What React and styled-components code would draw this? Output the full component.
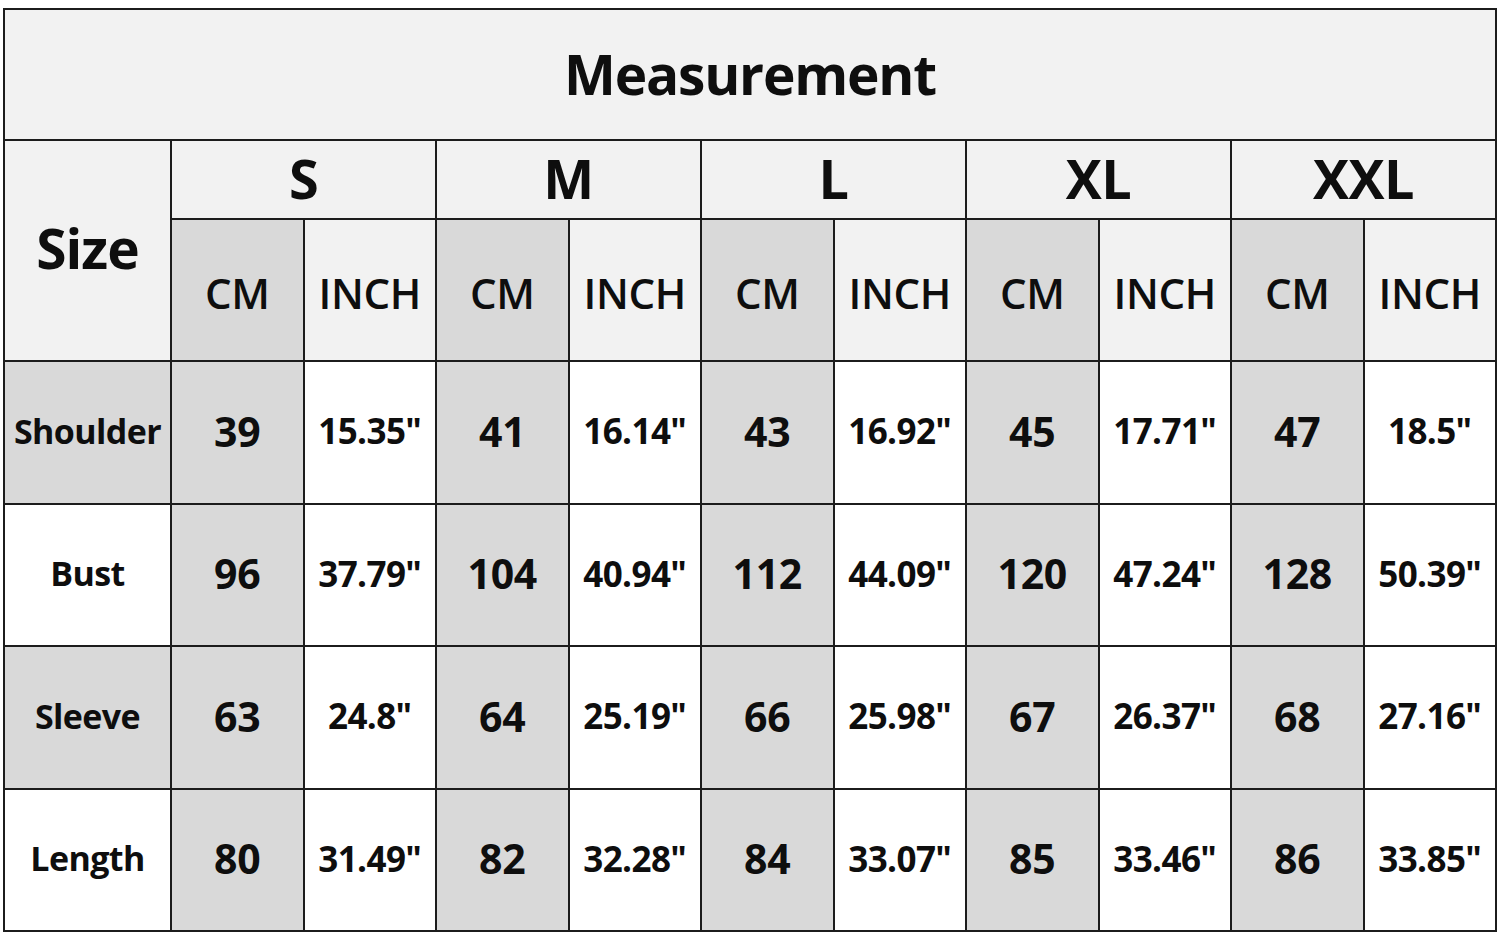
import styled, { createGlobalStyle } from 'styled-components';

const GlobalStyle = createGlobalStyle`
  body {
    margin: 0;
    background: #ffffff;
    font-family: "Open Sans", "Noto Sans", sans-serif;
    color: #0e0e0e;
  }
`;

const sizes = ['S', 'M', 'L', 'XL', 'XXL'];

const rows = [
  { label: 'Shoulder', shade: true, values: [['39', '15.35"'], ['41', '16.14"'], ['43', '16.92"'], ['45', '17.71"'], ['47', '18.5"']] },
  { label: 'Bust', shade: false, values: [['96', '37.79"'], ['104', '40.94"'], ['112', '44.09"'], ['120', '47.24"'], ['128', '50.39"']] },
  { label: 'Sleeve', shade: true, values: [['63', '24.8"'], ['64', '25.19"'], ['66', '25.98"'], ['67', '26.37"'], ['68', '27.16"']] },
  { label: 'Length', shade: false, values: [['80', '31.49"'], ['82', '32.28"'], ['84', '33.07"'], ['85', '33.46"'], ['86', '33.85"']] },
];

const SizeChart = () => {
  return (
    <Page>
      <GlobalStyle />
      <Grid>
        <TitleCell>Measurement</TitleCell>
        <SizeCell>Size</SizeCell>
        {sizes.map((s) => (
          <SizeHead key={s}>{s}</SizeHead>
        ))}
        {sizes.map((s) => [
          <UnitHead key={s + 'cm'} $cm>CM</UnitHead>,
          <UnitHead key={s + 'in'}>INCH</UnitHead>,
        ])}
        {rows.map((row) => [
          <LabelCell key={row.label} $shade={row.shade}>{row.label}</LabelCell>,
          ...row.values.map(([cm, inch], i) => [
            <CmCell key={row.label + i + 'c'}>{cm}</CmCell>,
            <InchCell key={row.label + i + 'i'}>{inch}</InchCell>,
          ]),
        ])}
      </Grid>
    </Page>
  );
};

const Page = styled.div`
  padding: 8px 0 0 3px;
  width: 1500px;
  height: 938px;
  box-sizing: border-box;
`;

const Grid = styled.div`
  display: grid;
  width: 1494px;
  height: 924px;
  box-sizing: border-box;
  padding: 2px;
  gap: 2px;
  background: #1c1c1c;
  grid-template-columns: 165px repeat(10, 1fr);
  grid-template-rows: 129px 77px 140px repeat(4, 1fr);
`;

const Cell = styled.div`
  display: flex;
  align-items: center;
  justify-content: center;
  font-weight: 700;
  white-space: nowrap;
`;

const TitleCell = styled(Cell)`
  grid-column: 1 / -1;
  background: #f2f2f2;
  font-size: 55px;
  letter-spacing: -1.2px;
  padding-bottom: 2px;
`;

const SizeCell = styled(Cell)`
  grid-row: span 2;
  background: #f2f2f2;
  font-size: 55px;
  letter-spacing: -1px;
  padding-bottom: 6px;
`;

const SizeHead = styled(Cell)`
  grid-column: span 2;
  background: #f2f2f2;
  font-size: 54px;
  letter-spacing: -0.5px;
  padding-bottom: 4px;
`;

const UnitHead = styled(Cell)`
  background: ${(p) => (p.$cm ? '#d9d9d9' : '#f2f2f2')};
  font-size: 42px;
  font-weight: 600;
  letter-spacing: -0.3px;
  padding-top: 4px;
`;

const LabelCell = styled(Cell)`
  background: ${(p) => (p.$shade ? '#d9d9d9' : '#ffffff')};
  font-size: 34px;
  letter-spacing: -0.6px;
  padding-bottom: 3px;
`;

const CmCell = styled(Cell)`
  background: #d9d9d9;
  font-size: 41px;
  letter-spacing: -0.3px;
  padding-bottom: 3px;
`;

const InchCell = styled(Cell)`
  background: #ffffff;
  font-size: 35px;
  letter-spacing: -0.6px;
  padding-bottom: 3px;
`;

export default SizeChart;
